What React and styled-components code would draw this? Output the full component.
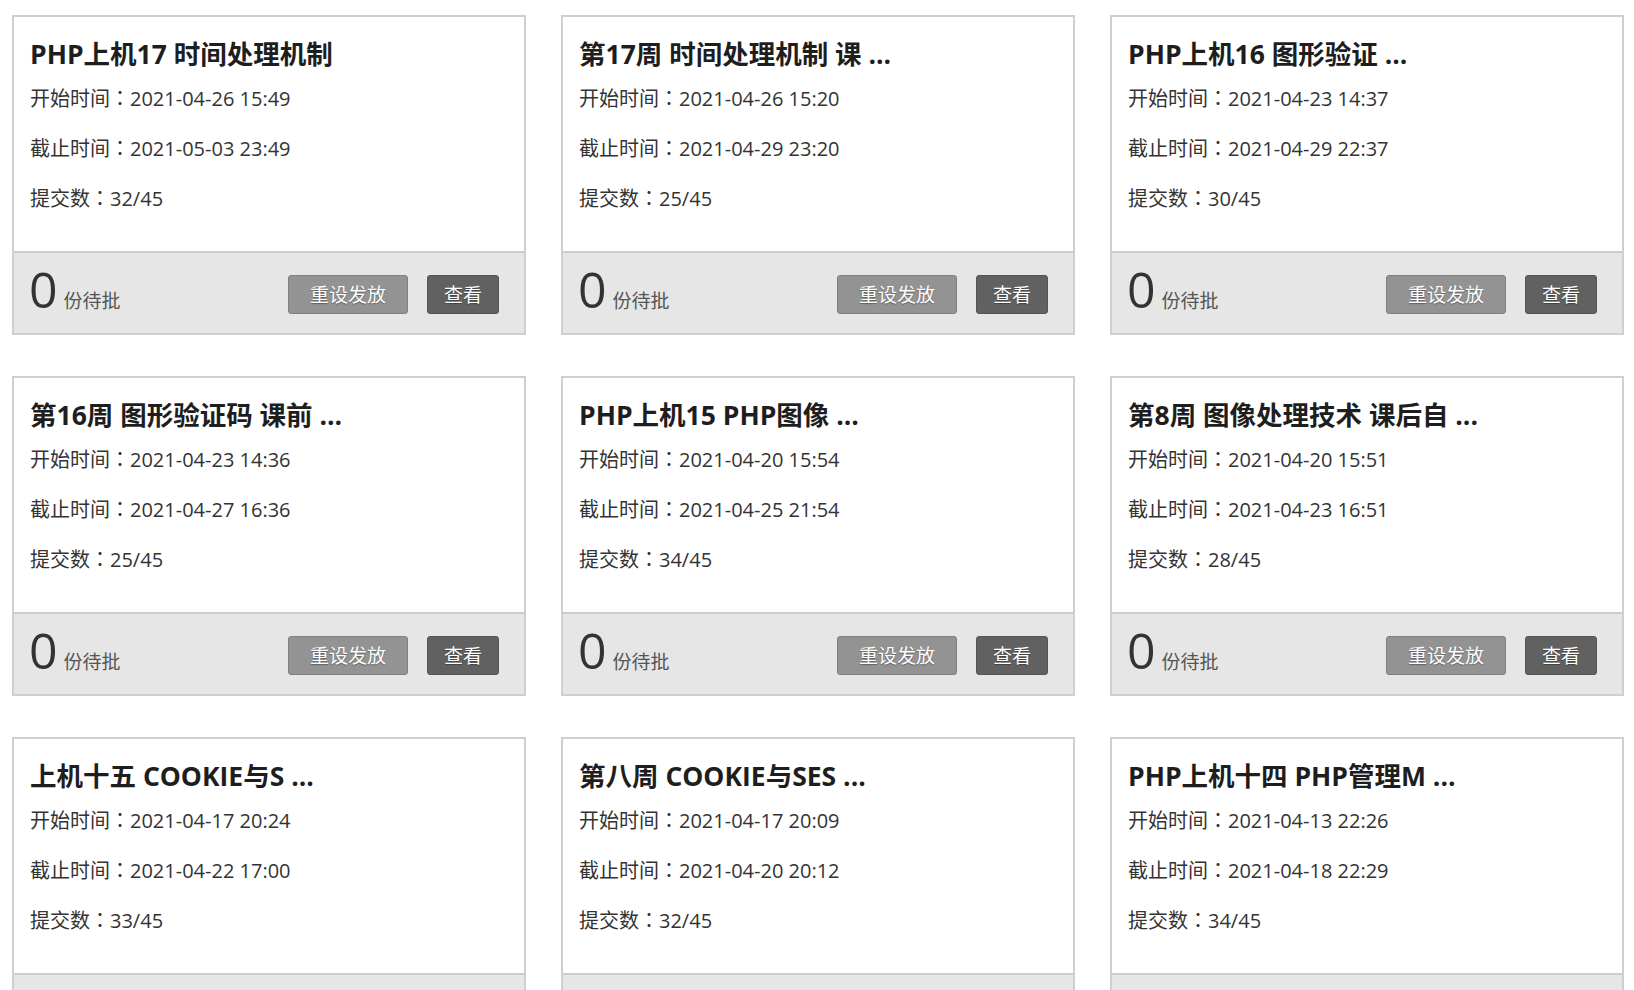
import styled, { createGlobalStyle } from 'styled-components';

const GlobalStyle = createGlobalStyle`
  body {
    margin: 0;
    background: #ffffff;
    font-family: "Open Sans", "Noto Sans CJK SC", sans-serif;
  }
`;

const Grid = styled.div`
  display: grid;
  grid-template-columns: repeat(3, 514px);
  column-gap: 35px;
  row-gap: 41px;
  padding: 15px 10px 0 12px;
`;

const Card = styled.div`
  border: 2px solid #cfcfcf;
  background: #ffffff;
  display: flex;
  flex-direction: column;
`;

const Body = styled.div`
  height: 234px;
  box-sizing: border-box;
  padding: 22px 16px 0 16px;
`;

const Title = styled.h3`
  margin: 0 0 5px 0;
  font-size: 26.5px;
  line-height: 30px;
  font-weight: 700;
  color: #1e1e1e;
  white-space: nowrap;
`;

const Meta = styled.p`
  margin: 0;
  height: 50px;
  font-size: 20px;
  line-height: 50px;
  color: #333333;
`;

// centred full-width colon, as in the screenshot
const Colon = styled.span`
  font-family: "Noto Sans CJK JP", "Noto Sans CJK SC", sans-serif;
  line-height: 1;
`;

const Footer = styled.div`
  height: 80px;
  border-top: 2px solid #cccccc;
  background: #e6e6e6;
  display: flex;
  align-items: center;
  justify-content: space-between;
  padding: 0 25px 0 15px;
`;

const Pending = styled.div`
  display: flex;
  align-items: baseline;
  gap: 6px;
  margin-top: -9px;
`;

const Count = styled.span`
  font-size: 50px;
  line-height: 1;
  color: #333333;
`;

const Label = styled.span`
  font-size: 19px;
  color: #555555;
`;

const Actions = styled.div`
  display: flex;
  gap: 19px;
  margin-top: 2px;
`;

const Button = styled.button`
  height: 39px;
  padding: 0 ${(p) => (p.$dark ? '16px' : '21px')};
  border: 1px solid ${(p) => (p.$dark ? '#555555' : '#808080')};
  border-radius: 3px;
  background: ${(p) => (p.$dark ? '#616161' : '#939393')};
  color: #ffffff;
  font-family: "Open Sans", "Noto Sans CJK SC", sans-serif;
  font-size: 19px;
  text-shadow: 0 1px 1px rgba(0, 0, 0, 0.35);
  cursor: pointer;
`;

const tasks = [
  { title: 'PHP上机17 时间处理机制', start: '2021-04-26 15:49', end: '2021-05-03 23:49', done: '32/45' },
  { title: '第17周 时间处理机制 课 ...', start: '2021-04-26 15:20', end: '2021-04-29 23:20', done: '25/45' },
  { title: 'PHP上机16 图形验证 ...', start: '2021-04-23 14:37', end: '2021-04-29 22:37', done: '30/45' },
  { title: '第16周 图形验证码 课前 ...', start: '2021-04-23 14:36', end: '2021-04-27 16:36', done: '25/45' },
  { title: 'PHP上机15 PHP图像 ...', start: '2021-04-20 15:54', end: '2021-04-25 21:54', done: '34/45' },
  { title: '第8周 图像处理技术 课后自 ...', start: '2021-04-20 15:51', end: '2021-04-23 16:51', done: '28/45' },
  { title: '上机十五 COOKIE与S ...', start: '2021-04-17 20:24', end: '2021-04-22 17:00', done: '33/45' },
  { title: '第八周 COOKIE与SES ...', start: '2021-04-17 20:09', end: '2021-04-20 20:12', done: '32/45' },
  { title: 'PHP上机十四 PHP管理M ...', start: '2021-04-13 22:26', end: '2021-04-18 22:29', done: '34/45' },
];

function TaskCard({ task }) {
  return (
    <Card>
      <Body>
        <Title>{task.title}</Title>
        <Meta>开始时间<Colon>：</Colon>{task.start}</Meta>
        <Meta>截止时间<Colon>：</Colon>{task.end}</Meta>
        <Meta>提交数<Colon>：</Colon>{task.done}</Meta>
      </Body>
      <Footer>
        <Pending>
          <Count>0</Count>
          <Label>份待批</Label>
        </Pending>
        <Actions>
          <Button>重设发放</Button>
          <Button $dark>查看</Button>
        </Actions>
      </Footer>
    </Card>
  );
}

export default function App() {
  return (
    <>
      <GlobalStyle />
      <Grid>
        {tasks.map((t) => (
          <TaskCard key={t.title} task={t} />
        ))}
      </Grid>
    </>
  );
}
